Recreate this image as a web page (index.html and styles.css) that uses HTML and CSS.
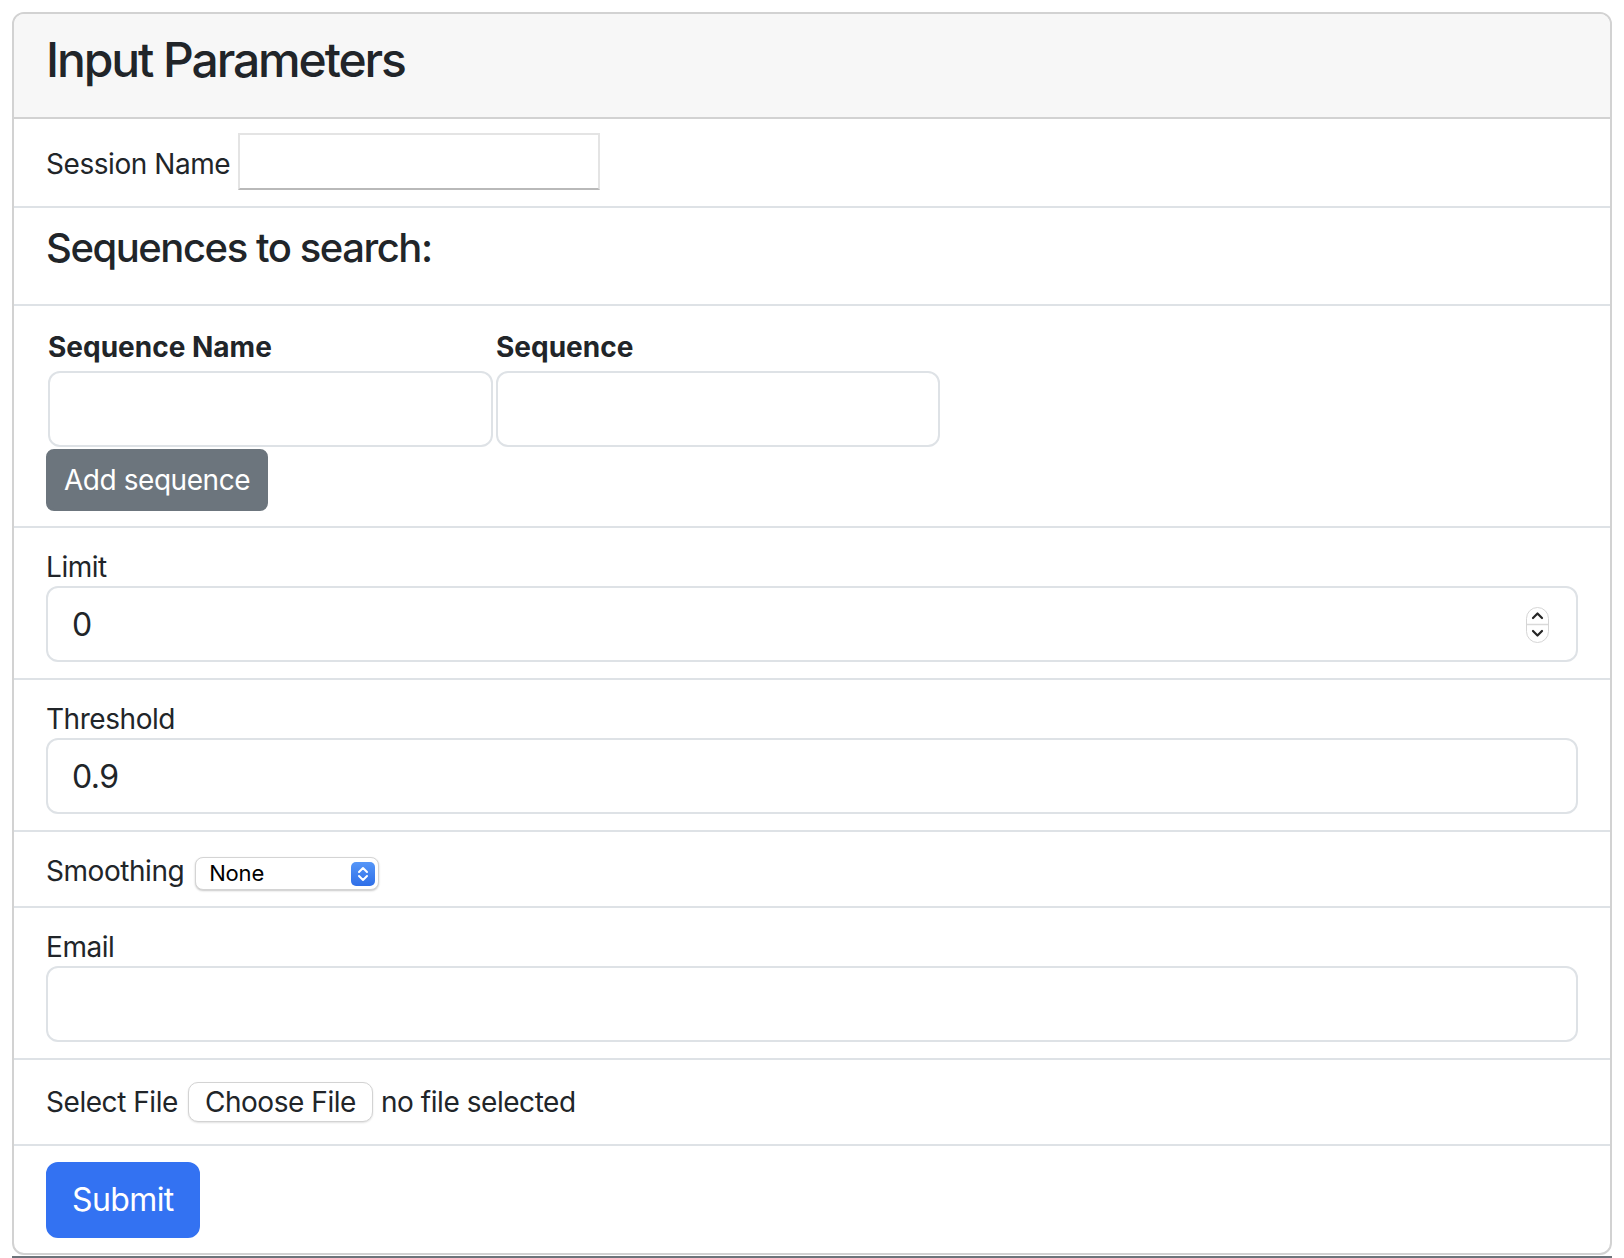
FILE: index.html
```html
<!DOCTYPE html>
<html lang="en">
<head>
<meta charset="utf-8">
<title>Input Parameters</title>
<link rel="stylesheet" href="styles.css">
</head>
<body>
<div class="page">
  <form class="card">
    <div class="card-header"><h4 class="title">Input Parameters</h4></div>

    <div class="row row-session">
      <label class="lbl" for="session">Session Name</label>
      <input class="plain-input" id="session" type="text">
    </div>

    <div class="row row-heading">
      <h5 class="subtitle">Sequences to search:</h5>
    </div>

    <div class="row row-seq">
      <div class="seq-grid">
        <div class="th">Sequence Name</div>
        <div class="th">Sequence</div>
        <input class="form-control seq-input" type="text">
        <input class="form-control seq-input" type="text">
      </div>
      <button class="btn btn-sm btn-secondary" type="button">Add sequence</button>
    </div>

    <div class="row row-stack">
      <label class="lbl block" for="limit">Limit</label>
      <div class="num-wrap">
        <input class="form-control num" id="limit" type="number" value="0">
        <svg class="spinner" width="23" height="36" viewBox="0 0 23 36" aria-hidden="true">
          <rect x="0.5" y="0.5" width="22" height="35" rx="11" fill="#fff" stroke="#d5d5d5"/>
          <line x1="1" y1="17.5" x2="22" y2="17.5" stroke="#d9d9d9" stroke-width="1.5"/>
          <path d="M7 11 L11.5 6.5 L16 11" fill="none" stroke="#262626" stroke-width="2.2" stroke-linecap="round" stroke-linejoin="round"/>
          <path d="M7 24 L11.5 28.5 L16 24" fill="none" stroke="#262626" stroke-width="2.2" stroke-linecap="round" stroke-linejoin="round"/>
        </svg>
      </div>
    </div>

    <div class="row row-stack">
      <label class="lbl block" for="threshold">Threshold</label>
      <input class="form-control" id="threshold" type="text" value="0.9">
    </div>

    <div class="row row-inline">
      <label class="lbl" for="smoothing">Smoothing</label>
      <span class="select-wrap">
        <select id="smoothing" class="select">
          <option>None</option>
        </select>
        <span class="select-arrow">
          <svg width="24" height="24" viewBox="0 0 24 24" aria-hidden="true">
            <path d="M8 10 L12 6 L16 10" fill="none" stroke="#fff" stroke-width="2" stroke-linecap="round" stroke-linejoin="round"/>
            <path d="M8 14 L12 18 L16 14" fill="none" stroke="#fff" stroke-width="2" stroke-linecap="round" stroke-linejoin="round"/>
          </svg>
        </span>
      </span>
    </div>

    <div class="row row-stack">
      <label class="lbl block" for="email">Email</label>
      <input class="form-control" id="email" type="email">
    </div>

    <div class="row row-file">
      <span class="lbl">Select File</span>
      <button class="file-btn" type="button">Choose File</button>
      <span class="lbl file-status">no file selected</span>
    </div>

    <div class="row row-submit">
      <button class="btn btn-primary" type="submit">Submit</button>
    </div>
  </form>
  <div class="strip"></div>
</div>
</body>
</html>
```

FILE: styles.css
```css
* { box-sizing: border-box; }

html, body {
  margin: 0;
  padding: 0;
  background: #fff;
}

body {
  font-family: Inter, "Noto Sans", "Liberation Sans", sans-serif;
  color: #212529;
}

.page {
  padding: 12px 12px 0;
}

.card {
  display: block;
  margin: 0;
  border: 2px solid #d2d2d2;
  border-radius: 12px;
  background: #fff;
}

.card-header {
  background: #f7f7f7;
  padding: 17px 32px 28px;
  border-bottom: 2px solid #d2d2d2;
  border-radius: 10px 10px 0 0;
}

.title {
  margin: 0;
  font-size: 48px;
  line-height: 58px;
  font-weight: 500;
  letter-spacing: -2.1px;
}

.row {
  padding: 16px 32px;
  border-bottom: 2px solid #dee2e6;
}

.row:last-child {
  border-bottom: 0;
}

.lbl {
  font-size: 28px;
  line-height: 42px;
  font-weight: 400;
  letter-spacing: -0.45px;
}

.lbl.block {
  display: block;
}

.row-stack {
  padding-top: 20px;
}

.row-stack .lbl.block {
  line-height: 38px;
}

/* session */
.row-session {
  display: flex;
  align-items: center;
  gap: 8px;
  padding-top: 14px;
  padding-bottom: 16px;
}

.row-session .lbl {
  padding-top: 4px;
}

.plain-input {
  width: 362px;
  height: 57px;
  border: 2px solid #e4e4e4;
  border-bottom-color: #b9b9b9;
  border-radius: 0;
  background: #fff;
  font: 28px Inter, sans-serif;
  padding: 0 6px;
}

/* heading */
.row-heading {
  padding-top: 16px;
  padding-bottom: 32px;
}

.subtitle {
  margin: 0;
  font-size: 40px;
  line-height: 48px;
  font-weight: 500;
  letter-spacing: -1.45px;
}

/* sequences */
.row-seq {
  padding-top: 20px;
  padding-bottom: 15px;
}

.seq-grid {
  display: grid;
  grid-template-columns: 445px 444px;
  column-gap: 3px;
  row-gap: 3px;
  margin-left: 2px;
  margin-bottom: 2px;
}

.th {
  font-size: 28px;
  line-height: 42px;
  font-weight: 700;
}

.form-control {
  display: block;
  width: 100%;
  height: 76px;
  padding: 12px 24px;
  font-family: Inter, "Noto Sans", sans-serif;
  font-size: 32px;
  line-height: 48px;
  letter-spacing: -0.6px;
  color: #212529;
  background: #fff;
  border: 2px solid #dee2e6;
  border-radius: 12px;
  outline: none;
}

.btn {
  display: inline-block;
  font-family: Inter, "Noto Sans", sans-serif;
  color: #fff;
  border-style: solid;
  border-width: 2px;
  cursor: pointer;
}

.btn-sm {
  height: 62px;
  padding: 8px 16px;
  font-size: 28px;
  line-height: 42px;
  letter-spacing: -0.45px;
  border-radius: 8px;
}

.btn-secondary {
  background: #6c757d;
  border-color: #6c757d;
}

.btn-primary {
  height: 76px;
  padding: 12px 24px;
  font-size: 32px;
  line-height: 48px;
  letter-spacing: -0.6px;
  border-radius: 12px;
  background: #3372f2;
  border-color: #3372f2;
}

/* number spinner */
.num-wrap {
  position: relative;
}

.num {
  -moz-appearance: textfield;
  appearance: textfield;
}

.num::-webkit-inner-spin-button,
.num::-webkit-outer-spin-button {
  -webkit-appearance: none;
  margin: 0;
}

.spinner {
  position: absolute;
  right: 29px;
  top: 21px;
}

/* select */
.row-inline {
  display: flex;
  align-items: baseline;
  gap: 11px;
  padding-top: 18px;
  padding-bottom: 14px;
}

.select-wrap {
  position: relative;
  display: inline-block;
}

.select {
  -webkit-appearance: none;
  appearance: none;
  width: 184px;
  height: 33px;
  padding: 0 0 0 13px;
  font-family: Inter, "Noto Sans", sans-serif;
  font-size: 22px;
  line-height: 31px;
  letter-spacing: -0.2px;
  color: #000;
  background: #fff;
  border: 1px solid #d4d4d4;
  border-radius: 8px;
  box-shadow: 0 1px 2px rgba(0, 0, 0, 0.22);
  outline: none;
}

.select-arrow {
  position: absolute;
  right: 4px;
  top: 4.5px;
  width: 24px;
  height: 24px;
  border-radius: 5px;
  background: linear-gradient(#5596f8, #2f6fe8);
  display: flex;
  pointer-events: none;
}

/* file */
.row-file {
  display: flex;
  align-items: center;
  height: 86px;
  gap: 10px;
}

.file-btn {
  height: 40px;
  padding: 0 16px;
  font-family: Inter, "Noto Sans", sans-serif;
  font-size: 28px;
  line-height: 38px;
  letter-spacing: -0.45px;
  color: #212529;
  background: #fff;
  border: 1px solid #d3d3d3;
  border-radius: 10px;
  box-shadow: 0 1px 2px rgba(0, 0, 0, 0.12);
}

.file-status {
  margin-left: -2px;
}

/* submit */
.row-submit {
  padding-bottom: 15px;
}

.strip {
  height: 3px;
  margin-top: 1px;
  background: #6c737a;
}
```
